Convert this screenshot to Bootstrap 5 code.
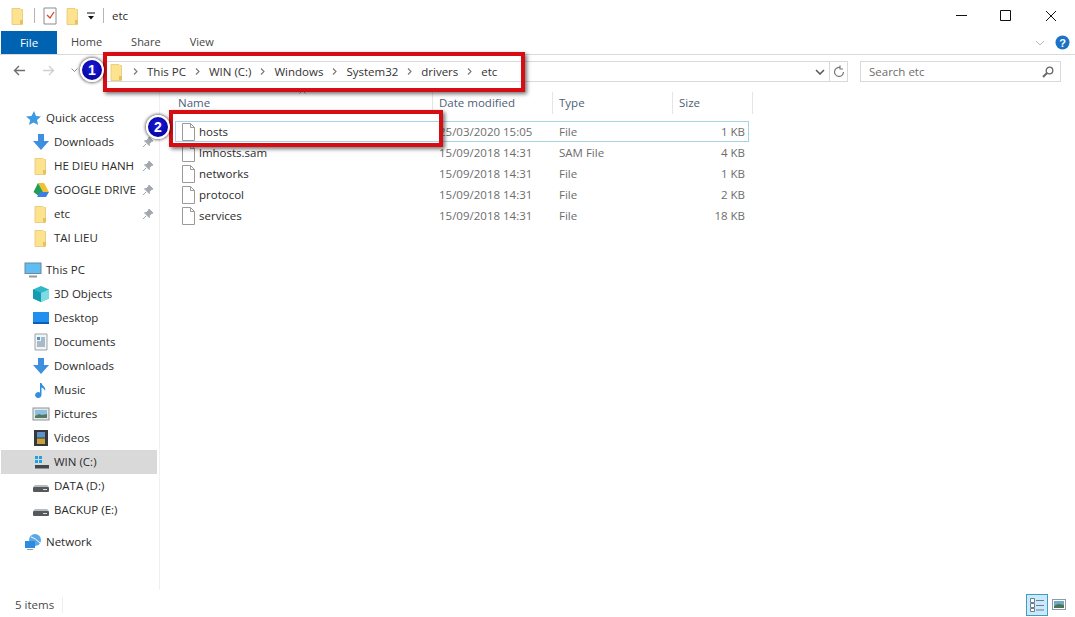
<!DOCTYPE html>
<html lang="en"><head><meta charset="utf-8"><title>etc</title>
<link href="https://cdn.jsdelivr.net/npm/bootstrap@5.3.0/dist/css/bootstrap.min.css" rel="stylesheet">
<style>
html,body{height:100%;overflow:hidden}
body{font-family:"Open Sans","Liberation Sans",sans-serif;font-size:11.5px;color:#2b2b2b;background:#fff;position:relative}
.win{width:1075px;height:617px}
.titlebar{height:31px;padding-right:1px}
.qa{padding-left:10px;width:140px}
.qa-sep{width:1px;height:15px;background:#b5b5b5}
.qa-drop{margin:0 8px 0 6px}
.wbtn{width:46px;height:31px}
.wmin{width:42px}
.ribbon{height:24px;border-bottom:1px solid #dadada}
.tabfile{width:56px;height:23px;margin-left:1px;background:#0063b1;color:#fff}
.tabx{color:#444;font-size:11px;padding-left:14px;gap:29px}
.helpbox{gap:10px;padding-right:5px}
.navrow{height:35px;padding-top:6px}
.navbtns{width:102px;padding-left:13px}
.addr{width:745px;height:21px;border:1px solid #d9d9d9;margin-left:1px}
.crumb{color:#333}
.crumbs{padding-left:6px;gap:9px}
.addr-end{width:18px;height:19px;border-left:1px solid #d9d9d9}
.search{width:201px;height:21px;border:1px solid #d9d9d9;margin-left:12px;padding:0 6px 0 8px;color:#6d6d6d}
.mainarea{height:500px}
.side{width:160px;padding-top:16px;border-right:1px solid #f0f0f0}
.sgroup{margin-bottom:8px}
.sitem{height:24px;width:156px;margin-left:1px;position:relative;color:#2b2b2b}
.lvl1{padding-left:23px}
.lvl2{padding-left:31px}
.sitem svg.ic{width:18px;height:18px;margin-right:4px;flex:none}
.sel{background:#d9d9d9}
.pin{position:absolute;left:141px;top:6px;width:12px;height:12px}
.files{padding:2px 0 0 15px;position:relative}
.hdr{height:29px;color:#4d6078;padding-bottom:7px}
.cname{width:258px;padding-left:3px}
.cdate{width:120px;padding-left:6px}
.ctype{width:120px;padding-left:6px}
.csize{width:80px;padding-left:6px}
.hdr>div{height:22px;line-height:22px;border-right:1px solid #e5e5e5}
.frow{height:21px;width:574px;border:1px solid transparent}
.frow .cname{padding-left:5px;width:257px;color:#2b2b2b}
.frow .cdate,.frow .ctype{color:#6d6d6d}
.frow .csize{width:75px;padding:0 3px 0 0;text-align:right;color:#6d6d6d}
.fsel{border-color:#a8d4ea}
.fic{width:15px;height:18px;margin-right:3px;flex:none}
.statusbar{height:27px;padding:2px 0 0 15px;color:#4a4a4a}
.stsep{width:1px;height:16px;background:#eee;margin-left:8px}
.vbtn{width:22px;height:22px;border:1px solid #3d9ec0;background:#cce8ff;margin-left:963px}
.redbox{position:absolute;border:4px solid #d60d12;box-shadow:2px 2px 4px rgba(0,0,0,.55)}
.rb1{left:103px;top:52px;width:422px;height:40px}
.rb2{left:169px;top:110px;width:274px;height:37px}
.numb{position:absolute;width:24px;height:24px;border-radius:50%;background:radial-gradient(circle at 50% 40%,#1a1ae0,#00008a);border:2px solid #fff;box-shadow:0 0 3px 1px rgba(0,0,0,.55);color:#fff;font:700 14px/20px "Liberation Sans",sans-serif;text-align:center}
.n1{left:80px;top:58px}
.n2{left:146px;top:115px}
.sorter{position:absolute;left:139px;top:0;width:7px;height:4px}
</style></head><body>
<svg width="0" height="0" class="d-block position-absolute">
<defs>
<symbol id="folder" viewBox="0 0 18 18"><path d="M3 1.500h8l1 1h1.500v15H3z" fill="#fde38f" stroke="#e5c56e" stroke-width=".8"/><path d="M11 13h3v4h-3z" fill="#e8c15c"/></symbol>
<symbol id="dl" viewBox="0 0 18 18"><path d="M6 1h6v7h5l-8 9-8-9h5z" fill="#3f8fe0"/></symbol>
<symbol id="pinic" viewBox="0 0 12 12"><path d="M7 1l4 4-1.400.6L7.500 7.500 7.200 9.500 2.500 4.800 4.500 4.500 6.400 2.400zM4 8l-3 3" fill="#a2a8ad" stroke="#a2a8ad"/></symbol>
<symbol id="file" viewBox="0 0 15 18"><path d="M1.500.5h8l4 4v13h-12z" fill="#fff" stroke="#9a9a9a"/><path d="M9.500.5v4h4" fill="none" stroke="#9a9a9a"/></symbol>
<symbol id="drive" viewBox="0 0 18 18"><rect x="1" y="10" width="16" height="5" rx="1" fill="#55595c"/><path d="M3 8h12l2 2H1z" fill="#b6babd"/><rect x="11" y="12" width="4" height="1" fill="#ddd"/></symbol>
<symbol id="chev" viewBox="0 0 5 7"><path d="M1 .5l3 3-3 3" fill="none" stroke="#777" stroke-width="1.100"/></symbol>
</defs></svg>
<div class="win d-flex flex-column">
 <div class="titlebar d-flex align-items-center justify-content-between">
  <div class="qa d-flex align-items-center">
   <svg width="16" height="18" viewBox="2 0 14 18" class="me-2"><use href="#folder" width="18" height="18"/></svg>
   <span class="qa-sep me-2"></span>
   <svg width="14" height="18" viewBox="0 0 14 18" class="me-2"><path d="M1 1h12v16H1z" fill="#fff" stroke="#8c8c8c"/><path d="M4 8l3 3 4-6" fill="none" stroke="#d14a2b" stroke-width="1.300"/></svg>
   <svg width="16" height="18" viewBox="2 0 14 18"><use href="#folder" width="18" height="18"/></svg>
   <svg width="8" height="8" viewBox="0 0 8 8" class="qa-drop"><path d="M0 1h8" stroke="#111"/><path d="M1 4h6L4 7.500z" fill="#111"/></svg>
   <span class="qa-sep"></span>
   <span class="ms-2">etc</span>
  </div>
  <div class="d-flex">
   <div class="wbtn wmin d-flex align-items-center justify-content-center"><svg width="11" height="11" viewBox="0 0 11 11"><path d="M0 5.500h11" stroke="#111"/></svg></div>
   <div class="wbtn d-flex align-items-center justify-content-center"><svg width="11" height="11" viewBox="0 0 11 11"><path d="M.5.500h10v10H.5z" fill="none" stroke="#111"/></svg></div>
   <div class="wbtn d-flex align-items-center justify-content-center"><svg width="12" height="12" viewBox="0 0 12 12"><path d="M1 1l10 10M11 1L1 11" stroke="#111"/></svg></div>
  </div>
 </div>
 <div class="ribbon d-flex">
  <div class="tabfile d-flex align-items-center justify-content-center">File</div>
  <div class="tabx d-flex align-items-center">
   <span>Home</span><span>Share</span><span>View</span>
  </div>
  <div class="helpbox ms-auto d-flex align-items-center">
   <svg width="10" height="6" viewBox="0 0 10 6"><path d="M1 1l4 4 4-4" fill="none" stroke="#b5b5b5"/></svg>
   <svg width="15" height="15" viewBox="0 0 15 15"><circle cx="7.500" cy="7.500" r="7" fill="#1a73c4"/><text x="7.500" y="11.500" fill="#fff" font-size="11" font-weight="700" text-anchor="middle" font-family="Liberation Sans">?</text></svg>
  </div>
 </div>
 <div class="navrow d-flex align-items-start">
  <div class="navbtns d-flex align-items-center gap-3 pt-1">
   <svg width="13" height="11" viewBox="0 0 13 11"><path d="M12 5.500H2M6 1L1.500 5.500 6 10" fill="none" stroke="#6e6e6e" stroke-width="1.400"/></svg>
   <svg width="13" height="11" viewBox="0 0 13 11"><path d="M1 5.500h10M7 1l4.500 4.500L7 10" fill="none" stroke="#d0d0d0" stroke-width="1.400"/></svg>
   <svg width="7" height="5" viewBox="0 0 7 5"><path d="M.5.500l3 3 3-3" fill="none" stroke="#8a8a8a"/></svg>
  </div>
  <div class="addr d-flex align-items-center">
   <div class="crumbs d-flex align-items-center crumb">
    <svg width="14" height="18" viewBox="3 0 12 18"><use href="#folder" width="18" height="18"/></svg>
    <svg width="5" height="7"><use href="#chev"/></svg><span>This PC</span><svg width="5" height="7"><use href="#chev"/></svg><span>WIN (C:)</span><svg width="5" height="7"><use href="#chev"/></svg><span>Windows</span><svg width="5" height="7"><use href="#chev"/></svg><span>System32</span><svg width="5" height="7"><use href="#chev"/></svg><span>drivers</span><svg width="5" height="7"><use href="#chev"/></svg><span>etc</span>
   </div>
   <svg width="10" height="6" viewBox="0 0 10 6" class="ms-auto me-1"><path d="M1 1l4 4 4-4" fill="none" stroke="#555" stroke-width="1.500"/></svg>
   <div class="addr-end d-flex align-items-center justify-content-center">
    <svg width="12" height="13" viewBox="0 0 12 13"><path d="M10.500 7a4.500 4.500 0 1 1-3-4.300M7 .5v3.500h3" fill="none" stroke="#777" stroke-width="1.200"/></svg>
   </div>
  </div>
  <div class="search d-flex align-items-center justify-content-between">
   <span>Search etc</span>
   <svg width="12" height="12" viewBox="0 0 12 12"><circle cx="7.500" cy="4.500" r="3.300" fill="none" stroke="#666" stroke-width="1.300"/><path d="M5 7l-4 4" stroke="#666" stroke-width="2"/></svg>
  </div>
 </div>
 <div class="mainarea d-flex">
  <nav class="side flex-shrink-0">
   <div class="sgroup">
    <div class="sitem lvl1 d-flex align-items-center"><svg class="ic" viewBox="0 0 18 18"><path d="M10 2l2 5 5 .5-4 3.500 1.200 5L9.500 13.500 5 16l1.200-5L2 7.500 7.500 7z" fill="#3e9ae0"/></svg>Quick access</div>
    <div class="sitem lvl2 d-flex align-items-center"><svg class="ic"><use href="#dl"/></svg>Downloads<svg class="pin"><use href="#pinic"/></svg></div>
    <div class="sitem lvl2 d-flex align-items-center"><svg class="ic"><use href="#folder"/></svg>HE DIEU HANH<svg class="pin"><use href="#pinic"/></svg></div>
    <div class="sitem lvl2 d-flex align-items-center"><svg class="ic" viewBox="0 0 18 18"><path d="M6 2h6l5 9h-6z" fill="#f5c02e"/><path d="M6 2l5 9-3 5-6.500-5z" fill="#1f9d57"/><path d="M5 16h9l3-5H8z" fill="#3d7fe0"/></svg>GOOGLE DRIVE<svg class="pin"><use href="#pinic"/></svg></div>
    <div class="sitem lvl2 d-flex align-items-center"><svg class="ic"><use href="#folder"/></svg>etc<svg class="pin"><use href="#pinic"/></svg></div>
    <div class="sitem lvl2 d-flex align-items-center"><svg class="ic"><use href="#folder"/></svg>TAI LIEU</div>
   </div>
   <div class="sgroup">
    <div class="sitem lvl1 d-flex align-items-center"><svg class="ic" viewBox="0 0 18 18"><rect x="1" y="2" width="16" height="10.500" fill="#5fbdf2" stroke="#6a8aa0"/><path d="M5 15.500h8" stroke="#8a9aa5" stroke-width="2"/></svg>This PC</div>
    <div class="sitem lvl2 d-flex align-items-center"><svg class="ic" viewBox="0 0 18 18"><path d="M9 1l8 3.500v9L9 17l-8-3.500v-9z" fill="#2fb7c6"/><path d="M9 8l8-3.500v9L9 17z" fill="#7fdbe3"/><path d="M1 4.500L9 8v9l-8-3.500z" fill="#159cb0"/></svg>3D Objects</div>
    <div class="sitem lvl2 d-flex align-items-center"><svg class="ic" viewBox="0 0 18 18"><rect x="1" y="3" width="16" height="12" fill="#1f8ff0"/><rect x="1" y="13" width="16" height="2" fill="#0b5fae"/></svg>Desktop</div>
    <div class="sitem lvl2 d-flex align-items-center"><svg class="ic" viewBox="0 0 18 18"><path d="M3 1h12v16H3z" fill="#f2f4f6" stroke="#9aa3aa"/><path d="M5 4h3v3H5z" fill="#4f93c8"/><path d="M9 5h4M9 7h4M5 9h8M5 11h8M5 13h8" stroke="#5f7f99"/></svg>Documents</div>
    <div class="sitem lvl2 d-flex align-items-center"><svg class="ic"><use href="#dl"/></svg>Downloads</div>
    <div class="sitem lvl2 d-flex align-items-center"><svg class="ic" viewBox="0 0 18 18"><path d="M8 2h1.500c.5 3 5 4 3.500 8-.5-2-2-3-3.500-3.500V14a3.200 3 0 1 1-1.500-2.500z" fill="#2f8fe0"/></svg>Music</div>
    <div class="sitem lvl2 d-flex align-items-center"><svg class="ic" viewBox="0 0 18 18"><rect x="1" y="3" width="16" height="12" fill="#e4e8ea" stroke="#8d9599"/><rect x="3" y="5" width="12" height="8" fill="#8cc0e0"/><path d="M3 11l4-2 3 1 5-1v4H3z" fill="#56785f"/></svg>Pictures</div>
    <div class="sitem lvl2 d-flex align-items-center"><svg class="ic" viewBox="0 0 18 18"><rect x="2" y="1" width="14" height="16" fill="#33383c"/><rect x="5" y="3" width="8" height="5.500" fill="#5c93c4"/><rect x="5" y="9.500" width="8" height="5.500" fill="#c8a040"/></svg>Videos</div>
    <div class="sitem lvl2 sel d-flex align-items-center"><svg class="ic" viewBox="0 0 18 18"><path d="M3 3h3v3H3zM7 3h3v3H7zM3 7h3v3H3zM7 7h3v3H7z" fill="#1fa2e0"/><rect x="3" y="12" width="14" height="3.500" fill="#44484b"/></svg>WIN (C:)</div>
    <div class="sitem lvl2 d-flex align-items-center"><svg class="ic"><use href="#drive"/></svg>DATA (D:)</div>
    <div class="sitem lvl2 d-flex align-items-center"><svg class="ic"><use href="#drive"/></svg>BACKUP (E:)</div>
   </div>
   <div class="sitem lvl1 d-flex align-items-center"><svg class="ic" viewBox="0 0 18 18"><circle cx="11" cy="7" r="6" fill="#5aa8e6"/><path d="M7 4c3 1 6 3 9 6" stroke="#fff" fill="none"/><rect x="1" y="8" width="10" height="7" fill="#2e8be0"/><path d="M3 16.500h6" stroke="#8a9aa5"/></svg>Network</div>
  </nav>
  <section class="files flex-grow-1">
   <svg class="sorter" viewBox="0 0 7 4"><path d="M.5 3.500l3-3 3 3" fill="none" stroke="#9a9a9a"/></svg>
   <div class="hdr d-flex">
    <div class="cname">Name</div><div class="cdate">Date modified</div><div class="ctype">Type</div><div class="csize">Size</div>
   </div>
   <div class="frow fsel d-flex align-items-center"><div class="cname d-flex align-items-center"><svg class="fic"><use href="#file"/></svg>hosts</div><div class="cdate">25/03/2020 15:05</div><div class="ctype">File</div><div class="csize">1 KB</div></div>
   <div class="frow d-flex align-items-center"><div class="cname d-flex align-items-center"><svg class="fic"><use href="#file"/></svg>lmhosts.sam</div><div class="cdate">15/09/2018 14:31</div><div class="ctype">SAM File</div><div class="csize">4 KB</div></div>
   <div class="frow d-flex align-items-center"><div class="cname d-flex align-items-center"><svg class="fic"><use href="#file"/></svg>networks</div><div class="cdate">15/09/2018 14:31</div><div class="ctype">File</div><div class="csize">1 KB</div></div>
   <div class="frow d-flex align-items-center"><div class="cname d-flex align-items-center"><svg class="fic"><use href="#file"/></svg>protocol</div><div class="cdate">15/09/2018 14:31</div><div class="ctype">File</div><div class="csize">2 KB</div></div>
   <div class="frow d-flex align-items-center"><div class="cname d-flex align-items-center"><svg class="fic"><use href="#file"/></svg>services</div><div class="cdate">15/09/2018 14:31</div><div class="ctype">File</div><div class="csize">18 KB</div></div>
  </section>
 </div>
 <div class="statusbar d-flex align-items-center">
  <span>5 items</span><span class="stsep"></span>
  <div class="vbtn d-flex align-items-center justify-content-center flex-shrink-0"><svg width="16" height="16" viewBox="0 0 16 16"><path d="M1.500 1.500h4v4h-4zM1.500 6.500h4v4h-4zM1.500 11.500h4v3h-4z" fill="#fff" stroke="#6a7f8c"/><path d="M7 3.500h8M7 8.500h8M7 13h8" stroke="#6a7f8c"/></svg></div>
  <svg width="14" height="11" viewBox="0 0 14 11" class="ms-1 flex-shrink-0"><rect x=".5" y=".5" width="13" height="10" fill="#fff" stroke="#8d9ba5"/><rect x="2" y="2" width="10" height="7" fill="#6fa9c4"/><path d="M2 7l4-2 6 1v3H2z" fill="#4c7358"/></svg>
 </div>
</div>
<div class="redbox rb1"></div><div class="redbox rb2"></div>
<div class="numb n1">1</div><div class="numb n2">2</div>
<script src="https://cdn.jsdelivr.net/npm/bootstrap@5.3.0/dist/js/bootstrap.bundle.min.js"></script>
</body></html>
